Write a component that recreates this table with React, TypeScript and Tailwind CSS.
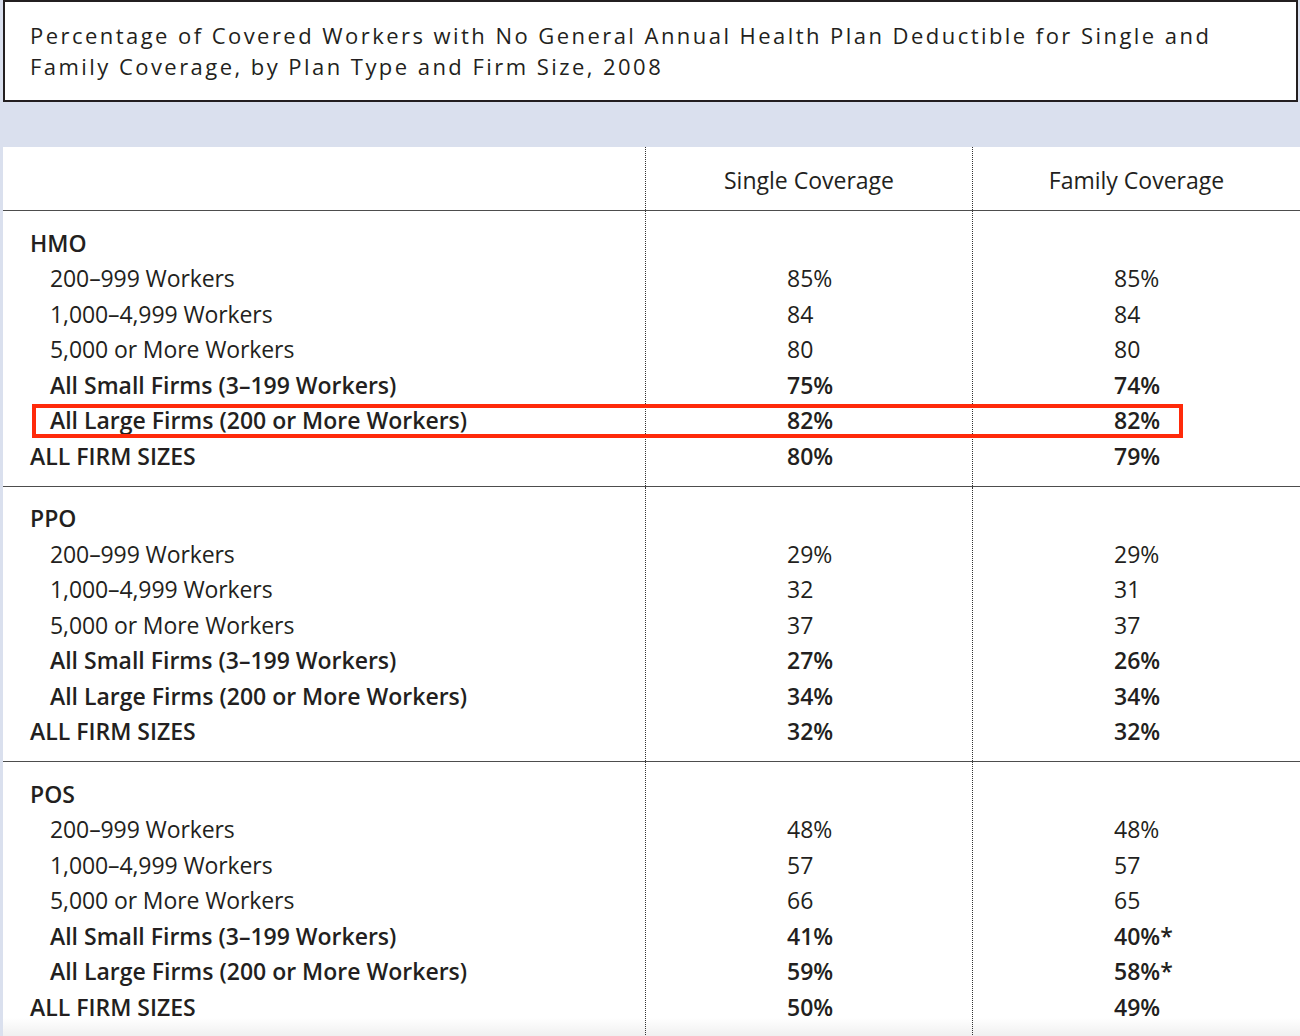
import React from 'react';

type Row = { label: string; single: string; family: string; kind: 'cat' | 'sub' | 'subBold' | 'total' };

const sections: { name: string; rows: [string, string][]; highlight?: boolean }[] = [
  {
    name: 'HMO',
    highlight: true,
    rows: [
      ['85%', '85%'],
      ['84', '84'],
      ['80', '80'],
      ['75%', '74%'],
      ['82%', '82%'],
      ['80%', '79%'],
    ],
  },
  {
    name: 'PPO',
    rows: [
      ['29%', '29%'],
      ['32', '31'],
      ['37', '37'],
      ['27%', '26%'],
      ['34%', '34%'],
      ['32%', '32%'],
    ],
  },
  {
    name: 'POS',
    rows: [
      ['48%', '48%'],
      ['57', '57'],
      ['66', '65'],
      ['41%', '40%*'],
      ['59%', '58%*'],
      ['50%', '49%'],
    ],
  },
];

const labels: { label: string; kind: Row['kind'] }[] = [
  { label: '200–999 Workers', kind: 'sub' },
  { label: '1,000–4,999 Workers', kind: 'sub' },
  { label: '5,000 or More Workers', kind: 'sub' },
  { label: 'All Small Firms (3–199 Workers)', kind: 'subBold' },
  { label: 'All Large Firms (200 or More Workers)', kind: 'subBold' },
  { label: 'ALL FIRM SIZES', kind: 'total' },
];

function buildRows(name: string, rows: [string, string][]): Row[] {
  return [
    { label: name, single: '', family: '', kind: 'cat' },
    ...labels.map((l, i) => ({ label: l.label, kind: l.kind, single: rows[i][0], family: rows[i][1] })),
  ];
}

function Section({ name, rows, highlight, last }: { name: string; rows: [string, string][]; highlight?: boolean; last?: boolean }) {
  const data = buildRows(name, rows);
  const bold = (k: Row['kind']) => k !== 'sub';
  return (
    <div
      className={`relative grid grid-cols-[642px_327px_1fr] ${
        last ? 'bg-linear-to-b from-white from-[93%] to-[#efefef]' : 'border-b border-[#4d4d4d]'
      }`}
    >
      <div className="flex flex-col pt-[14px] pb-[12px]">
        {data.map((r, i) => (
          <div
            key={i}
            className={`h-[35.5px] flex items-center ${r.kind === 'cat' || r.kind === 'total' ? 'pl-[27px]' : 'pl-[47px]'} ${
              bold(r.kind) ? 'font-semibold' : 'tracking-[-0.1px]'
            }`}
          >
            {r.label}
          </div>
        ))}
      </div>
      <div className="flex flex-col pt-[14px] pb-[12px] border-l border-dotted border-[#333]">
        {data.map((r, i) => (
          <div key={i} className={`h-[35.5px] flex items-center pl-[141px] ${bold(r.kind) ? 'font-semibold' : ''}`}>
            {r.single}
          </div>
        ))}
      </div>
      <div className="flex flex-col pt-[14px] pb-[12px] border-l border-dotted border-[#333]">
        {data.map((r, i) => (
          <div key={i} className={`h-[35.5px] flex items-center pl-[141px] ${bold(r.kind) ? 'font-semibold' : ''}`}>
            {r.family}
          </div>
        ))}
      </div>
      {highlight && (
        <div className="absolute left-[29px] top-[193px] w-[1151px] h-[34px] border-[4px] border-[#ff2a0a]" />
      )}
    </div>
  );
}

export default function App() {
  return (
    <div
      className="w-[1300px] h-[1036px] overflow-hidden bg-[#dae0ee] pl-[3px] text-[#231f20]"
      style={{ fontFamily: '"Open Sans", "Noto Sans", sans-serif' }}
    >
      {/* Title */}
      <div className="h-[102px] mr-[2px] border-2 border-[#231f20] bg-white flex items-center pl-[25px]">
        <h1 className="text-[22px] leading-[31px] tracking-[2.45px] font-normal">
          Percentage of Covered Workers with No General Annual Health Plan Deductible for Single and
          <br />
          Family Coverage, by Plan Type and Firm Size, 2008
        </h1>
      </div>

      <div className="h-[45px]" />

      {/* Table */}
      <div className="bg-white text-[23px]">
        <div className="grid grid-cols-[642px_327px_1fr] h-[64px] border-b border-[#4d4d4d]">
          <div />
          <div className="border-l border-dotted border-[#333] flex items-center justify-center pt-[4px]">
            Single Coverage
          </div>
          <div className="border-l border-dotted border-[#333] flex items-center justify-center pt-[4px]">
            Family Coverage
          </div>
        </div>
        {sections.map((s, i) => (
          <Section key={s.name} name={s.name} rows={s.rows} highlight={s.highlight} last={i === sections.length - 1} />
        ))}
      </div>
    </div>
  );
}
